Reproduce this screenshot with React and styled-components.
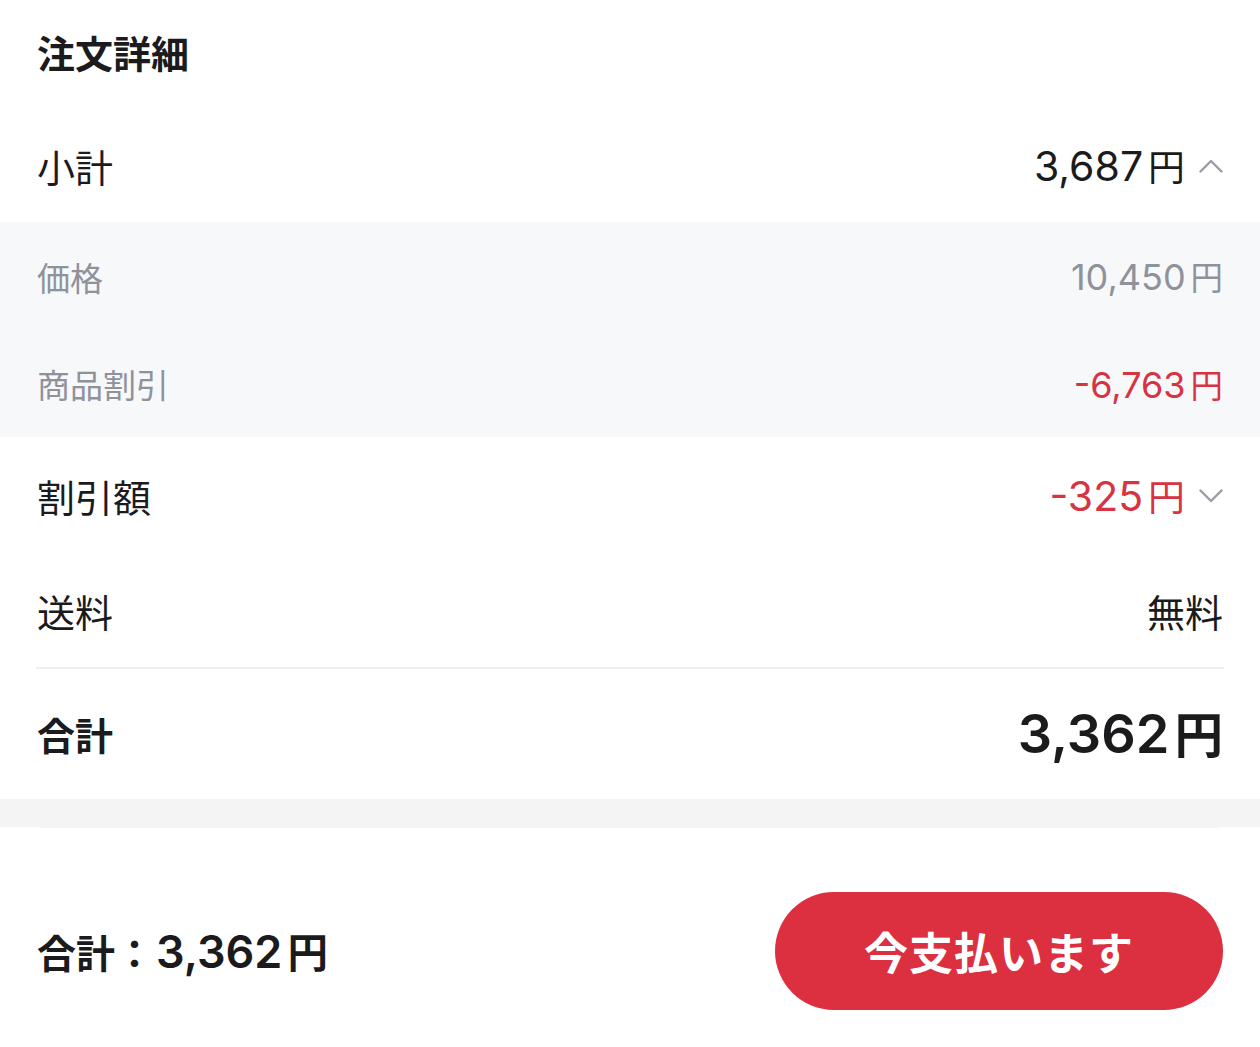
import React from "react";
import styled, { createGlobalStyle } from "styled-components";

const GlobalStyle = createGlobalStyle`
  html, body {
    margin: 0;
    padding: 0;
    background: #ffffff;
  }
  body {
    font-family: "Noto Sans CJK JP", "Noto Sans", sans-serif;
    color: #1b1b1d;
    -webkit-font-smoothing: antialiased;
  }
`;

const Page = styled.div`
  width: 1260px;
  height: 1047px;
  overflow: hidden;
  background: #ffffff;
`;

const Header = styled.div`
  height: 110px;
  padding: 0 37px;
  display: flex;
  align-items: center;
  padding-bottom: 6px;
  box-sizing: border-box;
`;

const Title = styled.h1`
  margin: 0;
  font-size: 38px;
  font-weight: 700;
  line-height: 1;
`;

const Row = styled.div`
  height: ${(p) => p.$h}px;
  padding: 0 37px;
  display: flex;
  align-items: center;
  justify-content: space-between;
  box-sizing: border-box;
`;

const SubBlock = styled.div`
  background: #f7f8fa;
`;

const Label = styled.span`
  font-size: ${(p) => (p.$sub ? 33 : 38)}px;
  font-weight: ${(p) => (p.$bold ? 700 : 400)};
  color: ${(p) => (p.$sub ? "#8f919b" : "#1b1b1d")};
  line-height: 1;
`;

const ValueWrap = styled.div`
  display: flex;
  align-items: center;
  gap: 14px;
`;

const Amount = styled.span`
  font-family: Inter, Roboto, "Noto Sans CJK JP", sans-serif;
  font-size: ${(p) => p.$size}px;
  font-weight: ${(p) => p.$weight || 400};
  color: ${(p) => p.$color || "#1b1b1d"};
  line-height: 1;
  display: flex;
  align-items: baseline;
`;

const Yen = styled.span`
  font-family: "Noto Sans CJK JP", sans-serif;
  font-size: 0.9em;
  font-weight: ${(p) => (p.$weight > 400 ? 700 : 400)};
  margin-left: 5px;
`;

const PlainValue = styled.span`
  font-size: 38px;
  line-height: 1;
`;

const Divider = styled.div`
  height: 2px;
  margin: 0 36px;
  background: #efefef;
`;

const Band = styled.div`
  height: 28px;
  background: #f4f4f4;
`;

const BandEdge = styled.div`
  height: 3px;
  margin: -2px 40px 0;
  background: #f4f4f4;
`;

const Footer = styled.div`
  height: 246px;
  padding: 0 37px;
  display: flex;
  align-items: center;
  justify-content: space-between;
  box-sizing: border-box;
`;

const TotalLine = styled.div`
  display: flex;
  align-items: baseline;
`;

const TotalLabel = styled.span`
  font-size: 39px;
  font-weight: 700;
  margin-right: 2px;
`;

const PayButton = styled.button`
  width: 448px;
  height: 118px;
  border: none;
  border-radius: 59px;
  background: #dc2f3f;
  color: #ffffff;
  font-family: "Noto Sans CJK JP", sans-serif;
  font-size: 44px;
  font-weight: 700;
  letter-spacing: 1px;
  cursor: pointer;
`;

const Chevron = ({ up }) => (
  <svg width="24" height="14" viewBox="0 0 24 14" fill="none">
    <path
      d={up ? "M1.5 12.5L12 2L22.5 12.5" : "M1.5 1.5L12 12L22.5 1.5"}
      stroke="#9a9ca6"
      strokeWidth="2.4"
      strokeLinecap="round"
      strokeLinejoin="round"
    />
  </svg>
);

const Price = ({ value, size, color, weight }) => (
  <Amount $size={size} $color={color} $weight={weight}>
    {value}
    <Yen $weight={weight}>円</Yen>
  </Amount>
);

export default function App() {
  return (
    <Page>
      <GlobalStyle />
      <Header>
        <Title>注文詳細</Title>
      </Header>

      <Row $h={112}>
        <Label>小計</Label>
        <ValueWrap>
          <Price value="3,687" size={41} />
          <Chevron up />
        </ValueWrap>
      </Row>

      <SubBlock>
        <Row $h={110}>
          <Label $sub>価格</Label>
          <Price value="10,450" size={36} color="#8f919b" />
        </Row>
        <Row $h={105}>
          <Label $sub>商品割引</Label>
          <Price value="-6,763" size={36} color="#d63343" />
        </Row>
      </SubBlock>

      <Row $h={118}>
        <Label>割引額</Label>
        <ValueWrap>
          <Price value="-325" size={41} color="#d63343" />
          <Chevron />
        </ValueWrap>
      </Row>

      <Row $h={112}>
        <Label>送料</Label>
        <PlainValue>無料</PlainValue>
      </Row>

      <Divider />

      <Row $h={130}>
        <Label $bold>合計</Label>
        <Price value="3,362" size={54} weight={600} />
      </Row>

      <Band />
      <BandEdge />

      <Footer>
        <TotalLine>
          <TotalLabel>合計：</TotalLabel>
          <Price value="3,362" size={45} weight={600} />
        </TotalLine>
        <PayButton>今支払います</PayButton>
      </Footer>
    </Page>
  );
}
